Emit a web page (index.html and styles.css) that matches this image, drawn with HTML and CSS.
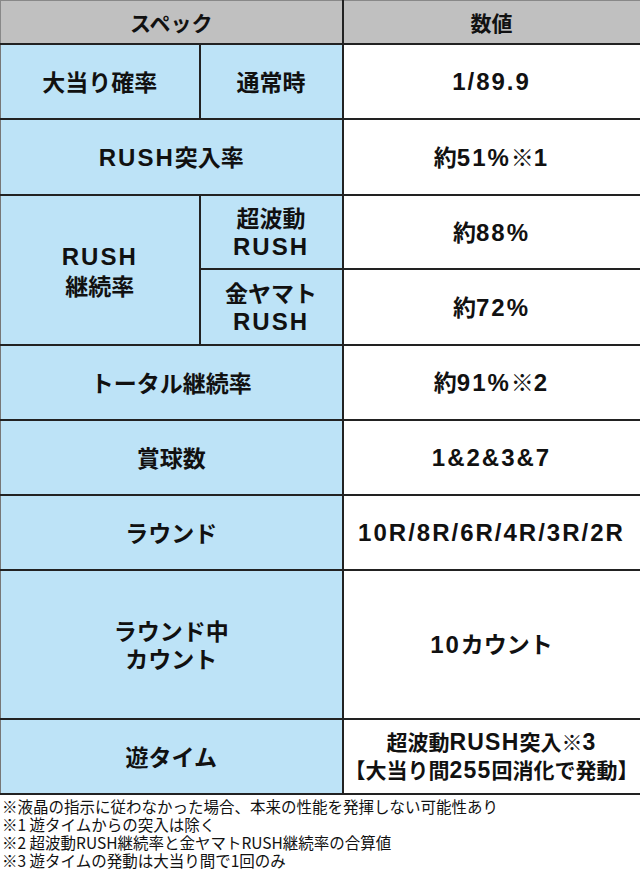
FILE: index.html
```html
<!DOCTYPE html>
<html lang="ja">
<head>
<meta charset="utf-8">
<link rel="stylesheet" href="styles.css">
</head>
<body>
<table class="spec">
  <colgroup>
    <col class="c1"><col class="c2"><col class="c3">
  </colgroup>
  <thead>
    <tr class="h-head">
      <th colspan="2">スペック</th>
      <th>数値</th>
    </tr>
  </thead>
  <tbody>
    <tr class="h75">
      <th class="k">大当り確率</th>
      <th class="k">通常時</th>
      <td><span class="n">1/89.9</span></td>
    </tr>
    <tr class="h76">
      <th class="k" colspan="2"><span class="n">RUSH</span>突入率</th>
      <td>約<span class="n">51%</span>※<span class="n">1</span></td>
    </tr>
    <tr class="h74">
      <th class="k" rowspan="2"><span class="n">RUSH</span><br>継続率</th>
      <th class="k">超波動<br><span class="n">RUSH</span></th>
      <td>約<span class="n">88%</span></td>
    </tr>
    <tr class="h76">
      <th class="k">金ヤマト<br><span class="n">RUSH</span></th>
      <td>約<span class="n">72%</span></td>
    </tr>
    <tr class="h75">
      <th class="k" colspan="2">トータル継続率</th>
      <td>約<span class="n">91%</span>※<span class="n">2</span></td>
    </tr>
    <tr class="h75">
      <th class="k" colspan="2">賞球数</th>
      <td><span class="n">1&amp;2&amp;3&amp;7</span></td>
    </tr>
    <tr class="h75">
      <th class="k" colspan="2">ラウンド</th>
      <td><span class="n">10R/8R/6R/4R/3R/2R</span></td>
    </tr>
    <tr class="h149">
      <th class="k" colspan="2">ラウンド中<br>カウント</th>
      <td><span class="n">10</span>カウント</td>
    </tr>
    <tr class="h75">
      <th class="k" colspan="2">遊タイム</th>
      <td class="small">超波動<span class="n">RUSH</span>突入※<span class="n">3</span><br>【大当り間<span class="n">255</span>回消化で発動】</td>
    </tr>
  </tbody>
</table>
<div class="notes">
  <p>※液晶の指示に従わなかった場合、本来の性能を発揮しない可能性あり</p>
  <p>※1&nbsp;遊タイムからの突入は除く</p>
  <p>※2&nbsp;超波動RUSH継続率と金ヤマトRUSH継続率の合算値</p>
  <p>※3&nbsp;遊タイムの発動は大当り間で1回のみ</p>
</div>
</body>
</html>
```

FILE: styles.css
```css
html, body {
  margin: 0;
  padding: 0;
  background: #ffffff;
}
body {
  width: 640px;
  font-family: "Liberation Sans", "Noto Sans CJK JP", sans-serif;
  color: #111;
}
.spec {
  width: 640px;
  border-collapse: collapse;
  table-layout: fixed;
}
.c1 { width: 199px; }
.c2 { width: 143px; }
.c3 { width: 298px; }

.spec th, .spec td {
  border: 2px solid #222;
  padding: 0;
  text-align: center;
  vertical-align: middle;
  font-family: "Noto Sans CJK JP", sans-serif;
  font-weight: 700;
  font-size: 23px;
  line-height: 28px;
}
.spec thead th {
  background: #c0c0c0;
  border-top: 1px solid #888;
  font-size: 21px;
}
.spec thead th:first-child { border-left: 1px solid #888; }
.spec .k {
  background: #bde3f7;
  border-left: 1px solid #777;
}
.spec td { background: #fff; }
.spec td.small {
  font-size: 21px;
  line-height: 27px;
}
.spec td.small .n { font-size: 23px; letter-spacing: 1.2px; }

.n {
  font-family: "Liberation Sans", sans-serif;
  font-size: 24px;
  letter-spacing: 2px;
}

.h-head { height: 43px; }
.h74 { height: 74px; }
.h75 { height: 75px; }
.h76 { height: 76px; }
.h149 { height: 149px; }

.notes {
  padding: 2px 0 0 2px;
  font-family: "Noto Sans CJK JP", sans-serif;
  font-size: 15.5px;
  line-height: 18px;
  color: #111;
}
.notes p { margin: 0; }
```
